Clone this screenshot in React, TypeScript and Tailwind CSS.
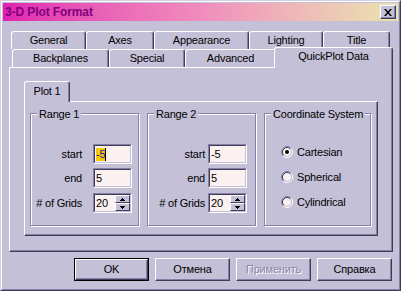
import React from "react";

const raised =
  "border border-t-white border-l-white border-r-[#403c58] border-b-[#403c58] shadow-[inset_-1px_-1px_0_#8480a8]";
const tabBase =
  "flex items-center justify-center rounded-t-[3px] border-l border-t border-r border-l-white border-t-white border-r-[#403c58] shadow-[inset_-1px_0_0_#8480a8]";

function Field({ children }: { children: React.ReactNode }) {
  return (
    <div className="w-[39px] h-[20px] border border-t-[#8480a8] border-l-[#8480a8] border-r-white border-b-white">
      <div className="h-full border border-t-[#403c58] border-l-[#403c58] border-r-[#c4c0d8] border-b-[#c4c0d8] bg-[#fbf1f0] flex items-center">
        {children}
      </div>
    </div>
  );
}

function SpinField({ value }: { value: string }) {
  return (
    <div className="w-[39px] h-[20px] border border-t-[#8480a8] border-l-[#8480a8] border-r-white border-b-white">
      <div className="h-full border border-t-[#403c58] border-l-[#403c58] border-r-[#c4c0d8] border-b-[#c4c0d8] bg-[#fbf1f0] flex items-stretch">
        <span className="flex-1 pl-[1px] flex items-center">{value}</span>
        <div className="w-[15px] flex flex-col">
          <div className="h-[8px] bg-[#c4c0d8] border border-t-white border-l-white border-r-[#403c58] border-b-[#403c58] flex items-center justify-center">
            <svg width="5" height="3" viewBox="0 0 5 3" shapeRendering="crispEdges">
              <path d="M2 0h1v1h1v1h1v1H0V2h1V1h1z" fill="#000" />
            </svg>
          </div>
          <div className="h-[8px] bg-[#c4c0d8] border border-t-white border-l-white border-r-[#403c58] border-b-[#403c58] flex items-center justify-center">
            <svg width="5" height="3" viewBox="0 0 5 3" shapeRendering="crispEdges">
              <path d="M0 0h5v1H4v1H3v1H2V2H1V1H0z" fill="#000" />
            </svg>
          </div>
        </div>
      </div>
    </div>
  );
}

function Radio({ checked }: { checked?: boolean }) {
  return (
    <svg width="12" height="12" viewBox="0 0 12 12">
      <circle cx="6" cy="6" r="4" fill="#fbf1f0" />
      <path d="M2.11 9.89A5.5 5.5 0 0 1 9.89 2.11" fill="none" stroke="#8480a8" />
      <path d="M9.89 2.11A5.5 5.5 0 0 1 2.11 9.89" fill="none" stroke="#ffffff" />
      <path d="M2.82 9.18A4.5 4.5 0 0 1 9.18 2.82" fill="none" stroke="#403c58" />
      <path d="M9.18 2.82A4.5 4.5 0 0 1 2.82 9.18" fill="none" stroke="#c4c0d8" />
      {checked && <circle cx="6" cy="6" r="2" fill="#000" />}
    </svg>
  );
}

function Group({
  title,
  className,
  children,
}: {
  title: string;
  className: string;
  children: React.ReactNode;
}) {
  return (
    <div
      className={
        "relative h-[113px] border border-[#8480a8] shadow-[inset_1px_1px_0_#fff,1px_1px_0_#fff] " +
        className
      }
    >
      <span className="absolute -top-[6px] left-[6px] px-[2px] bg-[#c4c0d8] leading-[13px]">
        {title}
      </span>
      {children}
    </div>
  );
}

export default function App() {
  return (
    <div className="w-[401px] h-[291px] bg-[#c4c0d8] font-['Liberation_Sans',Arial,sans-serif] text-[11px] leading-[13px] tracking-[-0.2px] text-black">
      <div className="h-full border border-t-[#d4d0e4] border-l-[#d4d0e4] border-r-[#403c58] border-b-[#403c58]">
        <div className="h-full border border-t-white border-l-white border-r-[#8480a8] border-b-[#8480a8] p-px flex flex-col">
          {/* Title bar */}
          <div className="h-[18px] shrink-0 flex items-center justify-between pl-[2px] pr-[2px] bg-linear-to-r from-[#e020b0] via-[#f08cbc] to-[#e8e4b0]">
            <span className="font-bold text-[12px] text-[#800080] tracking-[-0.1px]">
              3-D Plot Format
            </span>
            <div className={"w-[16px] h-[14px] flex items-center justify-center bg-[#c4c0d8] " + raised}>
              <svg width="8" height="7" viewBox="0 0 8 7">
                <path d="M0 0h2l2 2.5 2-2.5h2L5 3.5 8 7H6L4 4.5 2 7H0l3-3.5z" fill="#000" />
              </svg>
            </div>
          </div>

          {/* Tabs row 1 */}
          <div className="mt-[10px] flex h-[18px] pl-[8px]">
            <div className={"w-[75px] h-[18px] " + tabBase}>General</div>
            <div className={"w-[68px] h-[18px] " + tabBase}>Axes</div>
            <div className={"w-[95px] h-[18px] " + tabBase}>Appearance</div>
            <div className={"w-[74px] h-[18px] " + tabBase}>Lighting</div>
            <div className={"w-[67px] h-[18px] " + tabBase}>Title</div>
          </div>
          {/* Tabs row 2 */}
          <div className="flex h-[18px] pl-[9px] items-start">
            <div className={"w-[97px] h-[18px] " + tabBase}>Backplanes</div>
            <div className={"w-[76px] h-[18px] " + tabBase}>Special</div>
            <div className={"w-[91px] h-[18px] " + tabBase}>Advanced</div>
            <div
              className={
                "relative z-10 -mt-[2px] -ml-[2px] w-[119px] h-[21px] pb-[3px] bg-[#c4c0d8] " + tabBase
              }
            >
              QuickPlot Data
            </div>
          </div>

          {/* Outer panel */}
          <div className="ml-[6px] w-[384px] h-[185px] shrink-0 border border-t-white border-l-white border-r-[#403c58] border-b-[#403c58] shadow-[inset_-1px_-1px_0_#8480a8] pl-[14px] pt-[13px]">
            <div className={"relative z-10 w-[46px] h-[21px] pb-[1px] bg-[#c4c0d8] " + tabBase}>
              Plot 1
            </div>
            <div className="-mt-[1px] w-[354px] h-[135px] border border-t-white border-l-white border-r-[#403c58] border-b-[#403c58] shadow-[inset_-1px_-1px_0_#8480a8] flex gap-[8px] pl-[5px] pt-[11px]">
              <Group title="Range 1" className="w-[109px]">
                <div className="flex flex-col pt-[30px]">
                  <div className="flex items-center h-[20px]">
                    <span className="w-[51px] text-right">start</span>
                    <div className="ml-[11px]">
                      <Field>
                        <span className="ml-[1px] bg-[#f8c800] text-[#1818a0]">-5</span>
                        <span className="w-px h-[13px] bg-black" />
                      </Field>
                    </div>
                  </div>
                  <div className="mt-[4px] flex items-center h-[20px]">
                    <span className="w-[51px] text-right">end</span>
                    <div className="ml-[11px]">
                      <Field>
                        <span className="pl-[1px]">5</span>
                      </Field>
                    </div>
                  </div>
                  <div className="mt-[5px] flex items-center h-[20px]">
                    <span className="w-[51px] text-right"># of Grids</span>
                    <div className="ml-[11px]">
                      <SpinField value="20" />
                    </div>
                  </div>
                </div>
              </Group>

              <Group title="Range 2" className="w-[109px]">
                <div className="flex flex-col pt-[30px]">
                  <div className="flex items-center h-[20px]">
                    <span className="w-[57px] text-right">start</span>
                    <div className="ml-[3px]">
                      <Field>
                        <span className="pl-[1px]">-5</span>
                      </Field>
                    </div>
                  </div>
                  <div className="mt-[4px] flex items-center h-[20px]">
                    <span className="w-[57px] text-right">end</span>
                    <div className="ml-[3px]">
                      <Field>
                        <span className="pl-[1px]">5</span>
                      </Field>
                    </div>
                  </div>
                  <div className="mt-[5px] flex items-center h-[20px]">
                    <span className="w-[57px] text-right"># of Grids</span>
                    <div className="ml-[3px]">
                      <SpinField value="20" />
                    </div>
                  </div>
                </div>
              </Group>

              <Group title="Coordinate System" className="w-[107px]">
                <div className="flex flex-col gap-[5px] pt-[28px] pl-[16px]">
                  <div className="flex items-center h-[20px] gap-[4px]">
                    <Radio checked />
                    <span>Cartesian</span>
                  </div>
                  <div className="flex items-center h-[20px] gap-[4px]">
                    <Radio />
                    <span>Spherical</span>
                  </div>
                  <div className="flex items-center h-[20px] gap-[4px]">
                    <Radio />
                    <span>Cylindrical</span>
                  </div>
                </div>
              </Group>
            </div>
          </div>

          {/* Buttons */}
          <div className="mt-[6px] flex justify-end gap-[6px] pr-[6px]">
            <div className="w-[75px] h-[23px] border border-black">
              <div className={"h-full flex items-center justify-center " + raised}>OK</div>
            </div>
            <div className={"w-[75px] h-[23px] flex items-center justify-center " + raised}>Отмена</div>
            <div
              className={
                "w-[75px] h-[23px] flex items-center justify-center text-[#8884a8] [text-shadow:1px_1px_0_#fff] " +
                raised
              }
            >
              Применить
            </div>
            <div className={"w-[75px] h-[23px] flex items-center justify-center " + raised}>Справка</div>
          </div>
        </div>
      </div>
    </div>
  );
}
